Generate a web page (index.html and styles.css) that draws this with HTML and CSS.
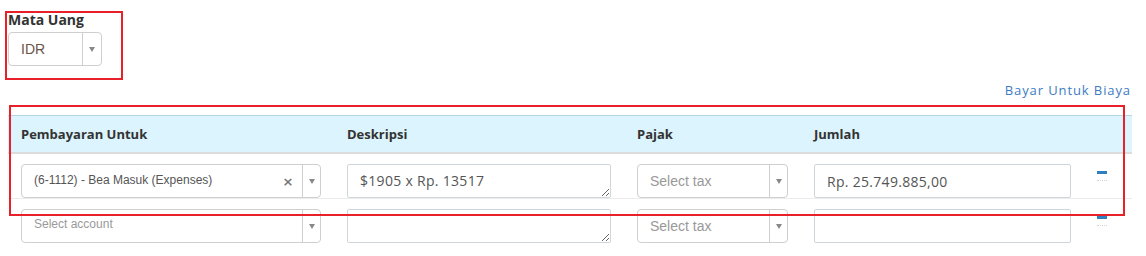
FILE: index.html
```html
<!DOCTYPE html>
<html>
<head>
<meta charset="utf-8">
<link rel="stylesheet" href="styles.css">
</head>
<body>
<div class="page">
  <div class="currency">
    <div class="label">Mata Uang</div>
    <div class="select sel-idr">
      <span class="sel-text idr">IDR</span>
      <span class="sel-arrow"><i class="tri"></i></span>
    </div>
  </div>
  <div class="link-row"><a class="link">Bayar Untuk Biaya</a></div>
  <div class="table">
    <div class="grid thead">
      <div class="th">Pembayaran Untuk</div>
      <div class="th">Deskripsi</div>
      <div class="th">Pajak</div>
      <div class="th">Jumlah</div>
      <div class="th"></div>
    </div>
    <div class="grid trow">
      <div class="select">
        <span class="sel-text acct">(6-1112) - Bea Masuk (Expenses)</span>
        <span class="sel-clear">×</span>
        <span class="sel-arrow"><i class="tri"></i></span>
      </div>
      <textarea class="area">$1905 x Rp. 13517</textarea>
      <div class="select">
        <span class="sel-text tax">Select tax</span>
        <span class="sel-arrow"><i class="tri"></i></span>
      </div>
      <input class="input" value="Rp. 25.749.885,00">
      <div class="minus-cell"><span class="minus"></span></div>
    </div>
    <div class="grid trow last">
      <div class="select">
        <span class="sel-text acct ph">Select account</span>
        <span class="sel-arrow"><i class="tri"></i></span>
      </div>
      <textarea class="area"></textarea>
      <div class="select">
        <span class="sel-text tax">Select tax</span>
        <span class="sel-arrow"><i class="tri"></i></span>
      </div>
      <input class="input" value="">
      <div class="minus-cell"><span class="minus"></span></div>
    </div>
  </div>
  <div class="annot annot-1"></div>
  <div class="annot annot-2"></div>
</div>
</body>
</html>
```

FILE: styles.css
```css
html, body {
  margin: 0;
  padding: 0;
  background: #fff;
}
.page {
  position: relative;
  width: 1146px;
  height: 256px;
  overflow: hidden;
  padding: 0 14px 0 8px;
  box-sizing: border-box;
  font-family: "Open Sans", "Liberation Sans", sans-serif;
  color: #333;
}
.currency {
  padding-top: 11px;
}
.label {
  font-weight: 700;
  font-size: 14px;
  line-height: 18px;
  color: #333;
}
.select {
  display: flex;
  align-items: center;
  height: 34px;
  box-sizing: border-box;
  border: 1px solid #cfcfcf;
  border-radius: 4px;
  background: #fff;
}
.sel-idr {
  width: 94px;
  margin-top: 3px;
}
.sel-text {
  flex: 1;
  padding-left: 12px;
  font-family: "Liberation Sans", Arial, sans-serif;
  white-space: nowrap;
  overflow: hidden;
}
.idr {
  font-size: 14px;
  color: #6a5448;
}
.acct {
  font-size: 12px;
  color: #555;
  margin-top: -3px;
}
.acct.ph {
  color: #999;
  margin-top: -4px;
}
.tax {
  font-size: 14px;
  color: #999;
}
.sel-clear {
  width: 16px;
  font-family: "DejaVu Sans", sans-serif;
  font-weight: 700;
  font-size: 13px;
  color: #777;
  text-align: center;
  margin-right: 6px;
}
.sel-arrow {
  align-self: stretch;
  width: 17px;
  border-left: 1px solid #cfcfcf;
  display: flex;
  align-items: center;
  justify-content: center;
}
.sel-idr .sel-arrow {
  width: 18px;
}
.tri {
  width: 0;
  height: 0;
  border-left: 3.5px solid transparent;
  border-right: 3.5px solid transparent;
  border-top: 5px solid #888;
  margin-top: 1px;
}
.link-row {
  display: flex;
  justify-content: flex-end;
  margin-top: 15px;
  padding-right: 1px;
}
.link {
  font-size: 13px;
  line-height: 18px;
  color: #3d7cc2;
  letter-spacing: 0.9px;
}
.table {
  margin-top: 16px;
}
.grid {
  display: grid;
  grid-template-columns: 300px 264px 151px 257px 1fr;
  column-gap: 26px;
  padding-left: 13px;
}
.thead {
  background: #dcf4fd;
  border-top: 1px solid #b4d6e3;
  border-bottom: 2px solid #dcdcdc;
  height: 36px;
}
.th {
  font-weight: 700;
  font-size: 13px;
  line-height: 36px;
  color: #333;
}
.trow {
  padding-top: 10px;
  border-bottom: 1px solid #ececec;
  height: 34px;
}
.trow.last {
  border-bottom: none;
}
.area, .input {
  box-sizing: border-box;
  height: 34px;
  margin: 0;
  border: 1px solid #cdd7db;
  border-radius: 2px;
  padding: 0 12px;
  font-family: "Open Sans", sans-serif;
  font-size: 14px;
  letter-spacing: 0.3px;
  color: #555;
  background: #fff;
  outline: none;
}
.area {
  padding-top: 6px;
  resize: vertical;
  overflow: hidden;
  line-height: 20px;
}
.minus-cell {
  display: flex;
  flex-direction: column;
  align-items: flex-start;
}
.minus {
  display: block;
  position: relative;
  width: 10px;
  height: 3px;
  margin-top: 7px;
  background: #2f7fc1;
}
.minus::after {
  content: "";
  position: absolute;
  left: 0;
  right: 0;
  top: 9px;
  border-bottom: 1px dotted #d4d4d4;
}
.annot {
  position: absolute;
  border: 2px solid #e8202a;
  box-sizing: border-box;
}
.annot-1 {
  left: 5px;
  top: 11px;
  width: 118px;
  height: 69px;
}
.annot-2 {
  left: 9px;
  top: 105px;
  width: 1116px;
  height: 111px;
}
```
